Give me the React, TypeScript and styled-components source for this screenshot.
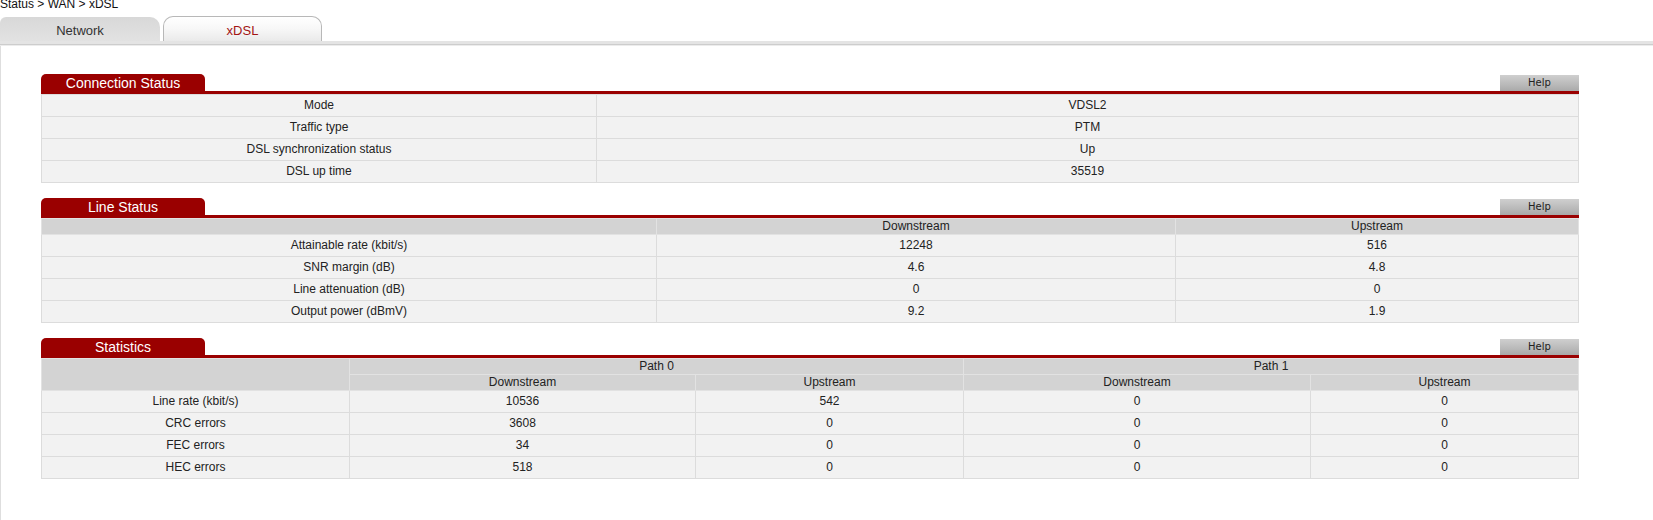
import React from 'react'
import styled, { createGlobalStyle } from 'styled-components'

const GlobalStyle = createGlobalStyle`
  html, body {
    margin: 0;
    padding: 0;
    background: #fff;
  }
  body {
    font-family: "Liberation Sans", Arial, sans-serif;
    color: #222;
  }
`

const Page = styled.div`
  min-height: 100vh;
  display: flex;
  flex-direction: column;
`

const Breadcrumb = styled.div`
  font-size: 12px;
  line-height: 14px;
  height: 14px;
  margin-top: -3px;
  color: #111;
`

const TabBar = styled.div`
  display: flex;
  align-items: flex-end;
  gap: 3px;
  height: 25px;
  margin-top: 5px;
`

const Tab = styled.div<{ $active?: boolean }>`
  width: ${p => (p.$active ? '159px' : '160px')};
  height: ${p => (p.$active ? '25px' : '24px')};
  box-sizing: border-box;
  padding-top: 4px;
  line-height: 20px;
  font-size: 13px;
  text-align: center;
  color: ${p => (p.$active ? '#a31414' : '#333')};
  border-radius: ${p => (p.$active ? '10px 10px 0 0' : '6px 10px 0 0')};
  border: ${p => (p.$active ? '1px solid #b8b8b8' : 'none')};
  border-bottom: none;
  background: ${p =>
    p.$active
      ? 'linear-gradient(to bottom, #ffffff 0%, #f7f7f7 50%, #eaeaea 100%)'
      : 'linear-gradient(to bottom, #d8d8d8 0%, #e2e2e2 100%)'};
  cursor: pointer;
`

const TabRule = styled.div`
  height: 5px;
  background: linear-gradient(
    to bottom,
    #e4e4e4 0,
    #e4e4e4 3px,
    #cdcdcd 3px,
    #cdcdcd 4px,
    #ececec 4px
  );
`

const Content = styled.div`
  flex: 1;
  border-left: 1px solid #dedede;
  padding: 28px 0 20px 40px;
`

const Section = styled.section`
  width: 1538px;
  margin-bottom: 15px;
`

const SectionHead = styled.div`
  display: flex;
  justify-content: space-between;
  align-items: flex-end;
  border-bottom: 3px solid #9a0000;
`

const SectionTitle = styled.h2`
  margin: 0;
  width: 164px;
  height: 17px;
  line-height: 18px;
  font-size: 14px;
  font-weight: normal;
  text-align: center;
  color: #fff;
  background: #9a0000;
  border-radius: 5px 5px 0 0;
`

const HelpButton = styled.button`
  width: 79px;
  height: 16px;
  padding: 0;
  border: 0;
  font-family: "DejaVu Sans", Verdana, sans-serif;
  font-size: 10px;
  line-height: 16px;
  color: #222;
  background: linear-gradient(to bottom, #cfcfcf 0%, #b9b9b9 60%, #a9a9a9 100%);
  cursor: pointer;
`

const Grid = styled.table`
  width: 100%;
  table-layout: fixed;
  border-collapse: collapse;
  font-size: 12px;
  text-align: center;
`

const HeadCell = styled.th`
  height: 15px;
  padding: 0;
  font-weight: normal;
  line-height: 15px;
  color: #222;
  background: #d3d3d3;
  border: 1px solid #e2e2e2;
`

const Cell = styled.td`
  height: 21px;
  padding: 0;
  line-height: 21px;
  background: #f2f2f2;
  border: 1px solid #dcdcdc;
`

type Row = { label: string; values: string[] }

const connection: Row[] = [
  { label: 'Mode', values: ['VDSL2'] },
  { label: 'Traffic type', values: ['PTM'] },
  { label: 'DSL synchronization status', values: ['Up'] },
  { label: 'DSL up time', values: ['35519'] },
]

const line: Row[] = [
  { label: 'Attainable rate (kbit/s)', values: ['12248', '516'] },
  { label: 'SNR margin (dB)', values: ['4.6', '4.8'] },
  { label: 'Line attenuation (dB)', values: ['0', '0'] },
  { label: 'Output power (dBmV)', values: ['9.2', '1.9'] },
]

const stats: Row[] = [
  { label: 'Line rate (kbit/s)', values: ['10536', '542', '0', '0'] },
  { label: 'CRC errors', values: ['3608', '0', '0', '0'] },
  { label: 'FEC errors', values: ['34', '0', '0', '0'] },
  { label: 'HEC errors', values: ['518', '0', '0', '0'] },
]

function SectionHeader({ title }: { title: string }) {
  return (
    <SectionHead>
      <SectionTitle>{title}</SectionTitle>
      <HelpButton>Help</HelpButton>
    </SectionHead>
  )
}

function Rows({ rows }: { rows: Row[] }) {
  return (
    <>
      {rows.map(r => (
        <tr key={r.label}>
          <Cell>{r.label}</Cell>
          {r.values.map((v, i) => (
            <Cell key={i}>{v}</Cell>
          ))}
        </tr>
      ))}
    </>
  )
}

export default function App() {
  return (
    <Page>
      <GlobalStyle />
      <Breadcrumb>Status &gt; WAN &gt; xDSL</Breadcrumb>
      <TabBar>
        <Tab>Network</Tab>
        <Tab $active>xDSL</Tab>
      </TabBar>
      <TabRule />
      <Content>
        <Section>
          <SectionHeader title="Connection Status" />
          <Grid>
            <colgroup>
              <col style={{ width: 555 }} />
              <col />
            </colgroup>
            <tbody>
              <Rows rows={connection} />
            </tbody>
          </Grid>
        </Section>

        <Section>
          <SectionHeader title="Line Status" />
          <Grid>
            <colgroup>
              <col style={{ width: 615 }} />
              <col style={{ width: 519 }} />
              <col />
            </colgroup>
            <thead>
              <tr>
                <HeadCell />
                <HeadCell>Downstream</HeadCell>
                <HeadCell>Upstream</HeadCell>
              </tr>
            </thead>
            <tbody>
              <Rows rows={line} />
            </tbody>
          </Grid>
        </Section>

        <Section>
          <SectionHeader title="Statistics" />
          <Grid>
            <colgroup>
              <col style={{ width: 308 }} />
              <col style={{ width: 346 }} />
              <col style={{ width: 268 }} />
              <col style={{ width: 347 }} />
              <col />
            </colgroup>
            <thead>
              <tr>
                <HeadCell rowSpan={2} />
                <HeadCell colSpan={2}>Path 0</HeadCell>
                <HeadCell colSpan={2}>Path 1</HeadCell>
              </tr>
              <tr>
                <HeadCell>Downstream</HeadCell>
                <HeadCell>Upstream</HeadCell>
                <HeadCell>Downstream</HeadCell>
                <HeadCell>Upstream</HeadCell>
              </tr>
            </thead>
            <tbody>
              <Rows rows={stats} />
            </tbody>
          </Grid>
        </Section>
      </Content>
    </Page>
  )
}
